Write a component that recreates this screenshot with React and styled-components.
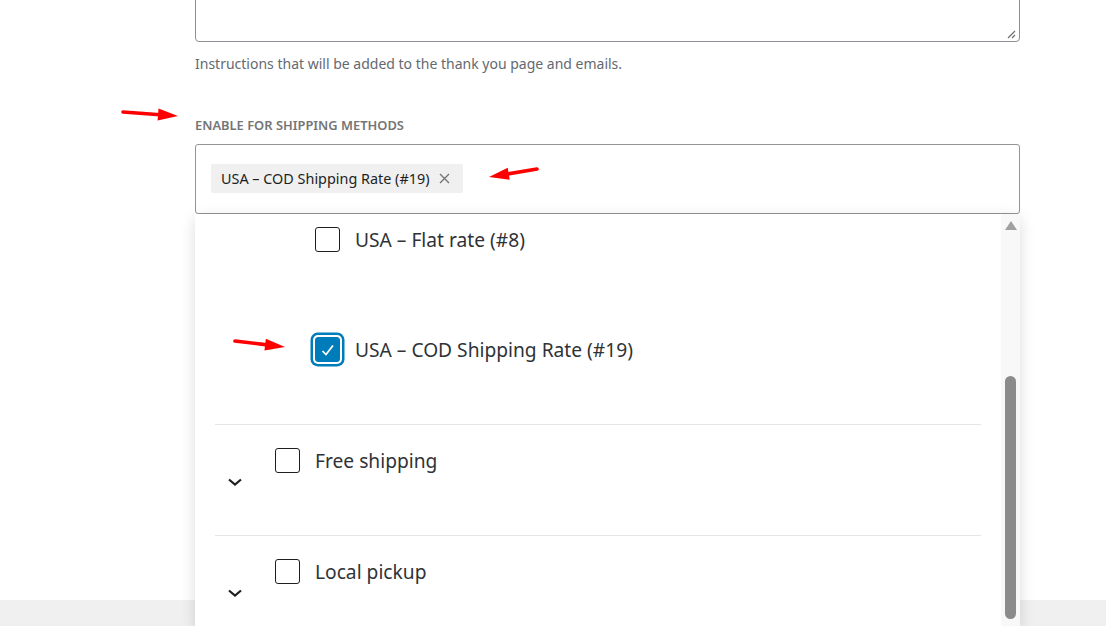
import React from "react";
import styled, { createGlobalStyle } from "styled-components";

const GlobalStyle = createGlobalStyle`
  html, body { margin: 0; padding: 0; background: #fff; }
  body { font-family: "Noto Sans", "Open Sans", sans-serif; }
  * { box-sizing: border-box; }
`;

const Page = styled.div`
  position: relative;
  width: 1106px;
  height: 626px;
  overflow: hidden;
  display: flex;
  flex-direction: column;
  background: #fff;
`;

const Main = styled.div`
  flex: 1;
  padding-left: 195px;
`;

const Column = styled.div`
  width: 825px;
  display: flex;
  flex-direction: column;
`;

const TextAreaBox = styled.div`
  position: relative;
  height: 100px;
  margin-top: -58px;
  border: 1px solid #8c8f94;
  border-radius: 4px;
  background: #fff;
`;

const Grip = styled.svg`
  position: absolute;
  right: 3px;
  bottom: 2px;
`;

const Help = styled.p`
  margin: 12px 0 0;
  font-size: 14px;
  line-height: 20px;
  color: #646970;
`;

const FieldLabel = styled.div`
  margin-top: 42px;
  font-size: 12.9px;
  font-weight: 600;
  line-height: 18px;
  color: #757575;
  text-transform: uppercase;
`;

const SelectWrap = styled.div`
  position: relative;
  margin-top: 10px;
`;

const SelectBox = styled.div`
  height: 70px;
  border: 1px solid #949494;
  border-radius: 3px;
  padding: 19px 15px;
  display: flex;
  align-items: flex-start;
`;

const Tag = styled.span`
  display: inline-flex;
  align-items: center;
  height: 29px;
  padding: 0 13px 0 10px;
  gap: 10px;
  background: #f0f0f0;
  border-radius: 2px;
  font-size: 14.4px;
  color: #1e1e1e;
`;

const TagClose = styled.span`
  display: inline-flex;
  color: #757575;
`;

const Dropdown = styled.div`
  position: absolute;
  top: 100%;
  left: 0;
  right: 0;
  height: 413px;
  background: #fff;
  z-index: 2;
  display: flex;
  box-shadow: 0 4px 14px rgba(0, 0, 0, 0.14);
  overflow: hidden;
`;

const List = styled.div`
  flex: 1;
  padding: 0 20px;
  margin-top: -10px;
  display: flex;
  flex-direction: column;
`;

const Row = styled.div`
  height: ${(p) => (p.$parent ? "111px" : "110px")};
  flex-shrink: 0;
  display: flex;
  border-top: ${(p) => (p.$parent ? "1px solid #e5e5e5" : "none")};
  padding-left: ${(p) => (p.$parent ? "0" : "100px")};
`;

const ChevronCell = styled.div`
  width: 40px;
  display: flex;
  align-items: center;
  justify-content: center;
  padding-top: 4px;
`;

const Item = styled.label`
  display: flex;
  align-items: center;
  gap: 15px;
  padding-top: 23px;
  padding-left: ${(p) => (p.$parent ? "20px" : "0")};
  align-self: flex-start;
  font-size: 19.2px;
  line-height: 25px;
  color: #2f3337;
`;

const Box = styled.span`
  width: 25px;
  height: 25px;
  flex-shrink: 0;
  border-radius: 3px;
  border: 1px solid ${(p) => (p.$checked ? "#007cba" : "#1e1e1e")};
  background: ${(p) => (p.$checked ? "#007cba" : "#fff")};
  box-shadow: ${(p) => (p.$focus ? "0 0 0 2px #fff, 0 0 0 4.5px #007cba" : "none")};
  display: flex;
  align-items: center;
  justify-content: center;
`;

const Scrollbar = styled.div`
  width: 19px;
  background: #f8f8f8;
  display: flex;
  flex-direction: column;
  align-items: center;
  padding-top: 7px;
`;

const ScrollUp = styled.span`
  width: 0;
  height: 0;
  border-left: 6.5px solid transparent;
  border-right: 6.5px solid transparent;
  border-bottom: 9px solid #a0a0a0;
`;

const Thumb = styled.span`
  margin-top: 146px;
  width: 11px;
  height: 243px;
  border-radius: 6px;
  background: #8b8b8b;
`;

const Footer = styled.div`
  height: 26px;
  background: #f0f0f1;
`;

const Annotations = styled.svg`
  position: absolute;
  left: 0;
  top: 0;
  pointer-events: none;
  z-index: 5;
`;

const Chevron = () => (
  <svg width="16" height="10" viewBox="0 0 16 10">
    <path d="M2 2.5 L8 7.5 L14 2.5" fill="none" stroke="#1e1e1e" strokeWidth="2.2" />
  </svg>
);

const Check = () => (
  <svg width="16" height="16" viewBox="0 0 16 16">
    <path d="M2.5 9 L6 12.5 L13 3.5" fill="none" stroke="#fff" strokeWidth="1.7" />
  </svg>
);

const Checkbox = ({ checked, focus }) => (
  <Box $checked={checked} $focus={focus}>
    {checked && <Check />}
  </Box>
);

const Arrow = ({ x1, y1, x2, y2 }) => {
  const dx = x2 - x1;
  const dy = y2 - y1;
  const len = Math.hypot(dx, dy);
  const ux = dx / len;
  const uy = dy / len;
  const hl = 20;
  const hw = 6;
  const bx = x2 - ux * hl;
  const by = y2 - uy * hl;
  const px = -uy;
  const py = ux;
  return (
    <g fill="#ff0000" stroke="none">
      <line x1={x1} y1={y1} x2={bx + ux * 2} y2={by + uy * 2} stroke="#ff0000" strokeWidth="3.6" strokeLinecap="round" />
      <polygon points={`${x2},${y2} ${bx + px * hw},${by + py * hw} ${bx - px * hw},${by - py * hw}`} />
    </g>
  );
};

const rows = [
  { label: "USA – Flat rate (#8)", parent: false },
  { label: "USA – COD Shipping Rate (#19)", parent: false, checked: true, focus: true },
  { label: "Free shipping", parent: true },
  { label: "Local pickup", parent: true },
];

export default function App() {
  return (
    <>
      <GlobalStyle />
      <Page>
        <Main>
          <Column>
            <TextAreaBox>
              <Grip width="10" height="10" viewBox="0 0 10 10">
                <path d="M9 2 L2 9 M9 6 L6 9" stroke="#6b6b6b" strokeWidth="1.1" />
              </Grip>
            </TextAreaBox>
            <Help>Instructions that will be added to the thank you page and emails.</Help>
            <FieldLabel>Enable for shipping methods</FieldLabel>
            <SelectWrap>
              <SelectBox>
                <Tag>
                  USA – COD Shipping Rate (#19)
                  <TagClose>
                    <svg width="11" height="11" viewBox="0 0 11 11">
                      <path d="M1 1 L10 10 M10 1 L1 10" stroke="#757575" strokeWidth="1.4" />
                    </svg>
                  </TagClose>
                </Tag>
              </SelectBox>
              <Dropdown>
                <List>
                  {rows.map((r) => (
                    <Row key={r.label} $parent={r.parent}>
                      {r.parent && (
                        <ChevronCell>
                          <Chevron />
                        </ChevronCell>
                      )}
                      <Item $parent={r.parent}>
                        <Checkbox checked={r.checked} focus={r.focus} />
                        {r.label}
                      </Item>
                    </Row>
                  ))}
                </List>
                <Scrollbar>
                  <ScrollUp />
                  <Thumb />
                </Scrollbar>
              </Dropdown>
            </SelectWrap>
          </Column>
        </Main>
        <Footer />
        <Annotations width="1106" height="626" viewBox="0 0 1106 626">
          <Arrow x1={123} y1={112} x2={178} y2={116} />
          <Arrow x1={537} y1={169} x2={489} y2={177} />
          <Arrow x1={235} y1={341} x2={285} y2={347} />
        </Annotations>
      </Page>
    </>
  );
}
